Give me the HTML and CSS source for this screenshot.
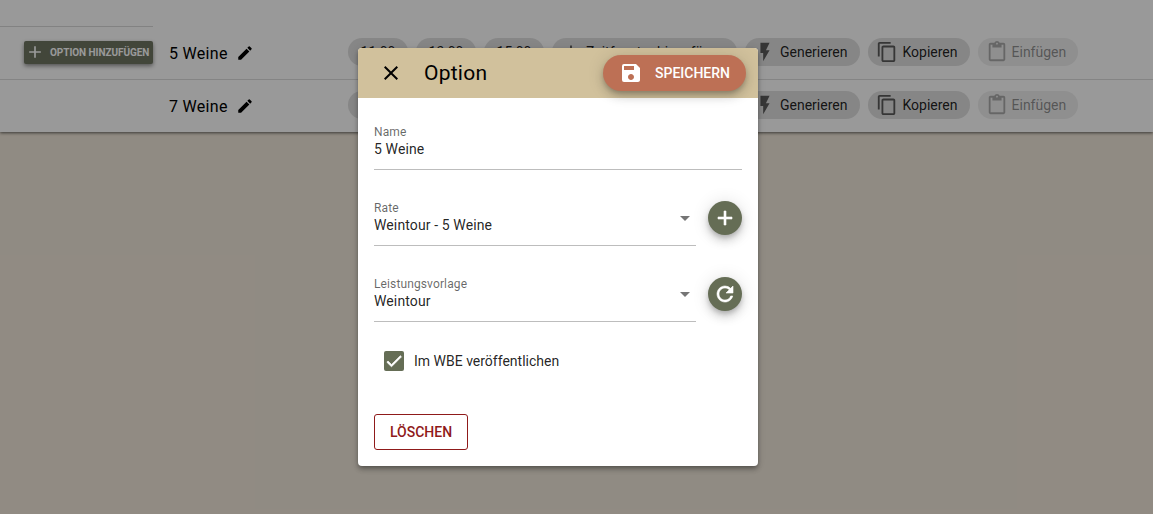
FILE: index.html
```html
<!DOCTYPE html>
<html lang="de">
<head>
<meta charset="utf-8">
<title>Option</title>
<link rel="stylesheet" href="styles.css">
</head>
<body>
<svg width="0" height="0" class="defs">
  <symbol id="i-pencil" viewBox="0 0 24 24"><path d="M3 17.25V21h3.75L17.81 9.94l-3.75-3.75L3 17.25zM20.71 7.04a1 1 0 0 0 0-1.41l-2.34-2.34a1 1 0 0 0-1.41 0l-1.83 1.83 3.75 3.75 1.83-1.83z"/></symbol>
  <symbol id="i-bolt" viewBox="0 0 24 24"><path d="M7 2v11h3v9l7-12h-4l4-8z"/></symbol>
  <symbol id="i-copy" viewBox="0 0 24 24"><path d="M16 1H4c-1.1 0-2 .9-2 2v14h2V3h12V1zm3 4H8c-1.1 0-2 .9-2 2v14c0 1.1.9 2 2 2h11c1.1 0 2-.9 2-2V7c0-1.100-.9-2-2-2zm0 16H8V7h11v14z"/></symbol>
  <symbol id="i-paste" viewBox="0 0 24 24"><path d="M19 2h-4.180C14.400.84 13.300 0 12 0S9.600.84 9.180 2H5c-1.100 0-2 .9-2 2v16c0 1.100.9 2 2 2h14c1.100 0 2-.9 2-2V4c0-1.100-.9-2-2-2zm-7 0c.55 0 1 .45 1 1s-.45 1-1 1-1-.45-1-1 .45-1 1-1zm7 18H5V4h2v3h10V4h2v16z"/></symbol>
  <symbol id="i-plus" viewBox="0 0 24 24"><path d="M19 13h-6v6h-2v-6H5v-2h6V5h2v6h6v2z"/></symbol>
</svg>

<div class="page">
  <div class="panel">
    <div class="rule-short"></div>
    <div class="row row-first">
      <div class="row-side">
        <button class="add-option"><svg class="ic-add"><use href="#i-plus"/></svg><span>OPTION HINZUFÜGEN</span></button>
      </div>
      <div class="row-name"><span>5 Weine</span><svg class="ic18"><use href="#i-pencil"/></svg></div>
      <div class="chips">
        <span class="chip chip-time">11:00</span>
        <span class="chip chip-time">13:00</span>
        <span class="chip chip-time">15:00</span>
        <span class="chip chip-tel"><svg class="ic24"><use href="#i-plus"/></svg>Zeitfenster hinzufügen</span>
        <span class="chip chip-gen"><svg class="ic24"><use href="#i-bolt"/></svg>Generieren</span>
        <span class="chip"><svg class="ic24"><use href="#i-copy"/></svg>Kopieren</span>
        <span class="chip chip-off"><svg class="ic24"><use href="#i-paste"/></svg>Einfügen</span>
      </div>
    </div>
    <div class="row">
      <div class="row-side"></div>
      <div class="row-name"><span>7 Weine</span><svg class="ic18"><use href="#i-pencil"/></svg></div>
      <div class="chips">
        <span class="chip chip-time">11:00</span>
        <span class="chip chip-time">13:00</span>
        <span class="chip chip-time">15:00</span>
        <span class="chip chip-tel"><svg class="ic24"><use href="#i-plus"/></svg>Zeitfenster hinzufügen</span>
        <span class="chip chip-gen"><svg class="ic24"><use href="#i-bolt"/></svg>Generieren</span>
        <span class="chip"><svg class="ic24"><use href="#i-copy"/></svg>Kopieren</span>
        <span class="chip chip-off"><svg class="ic24"><use href="#i-paste"/></svg>Einfügen</span>
      </div>
    </div>
  </div>
</div>

<div class="backdrop"></div>

<div class="dialog">
  <header class="dialog-head">
    <svg class="close" viewBox="0 0 24 24"><path d="M19 6.410 17.590 5 12 10.590 6.410 5 5 6.410 10.590 12 5 17.590 6.410 19 12 13.410 17.590 19 19 17.590 13.410 12z"/></svg>
    <h1>Option</h1>
    <button class="save">
      <svg viewBox="0 0 24 24"><path d="M17 3H5a2 2 0 0 0-2 2v14a2 2 0 0 0 2 2h14c1.100 0 2-.9 2-2V7l-4-4zm-5 16c-1.660 0-3-1.340-3-3s1.340-3 3-3 3 1.340 3 3-1.340 3-3 3zm3-10H5V5h10v4z"/></svg>
      <span>SPEICHERN</span>
    </button>
  </header>
  <div class="dialog-body">
    <div class="field">
      <label>Name</label>
      <div class="value">5 Weine</div>
    </div>
    <div class="field-row">
      <div class="field">
        <label>Rate</label>
        <div class="value">Weintour - 5 Weine</div>
        <i class="caret"></i>
      </div>
      <button class="fab"><svg viewBox="0 0 24 24"><path d="M19 13h-6v6h-2v-6H5v-2h6V5h2v6h6v2z"/></svg></button>
    </div>
    <div class="field-row">
      <div class="field">
        <label>Leistungsvorlage</label>
        <div class="value">Weintour</div>
        <i class="caret"></i>
      </div>
      <button class="fab"><svg viewBox="0 0 24 24"><path d="M17.650 6.350A7.958 7.958 0 0 0 12 4c-4.420 0-7.990 3.580-7.990 8s3.570 8 7.990 8c3.730 0 6.840-2.550 7.730-6h-2.080A5.990 5.990 0 0 1 12 18c-3.310 0-6-2.690-6-6s2.690-6 6-6c1.660 0 3.140.69 4.220 1.780L13 11h7V4l-2.350 2.350z"/></svg></button>
    </div>
    <div class="check">
      <span class="box"><svg viewBox="0 0 24 24"><path d="M9 16.170 4.830 12l-1.420 1.410L9 19 21 7l-1.410-1.410z"/></svg></span>
      <span>Im WBE veröffentlichen</span>
    </div>
    <button class="delete">LÖSCHEN</button>
  </div>
</div>
</body>
</html>
```

FILE: styles.css
```css
* { box-sizing: border-box; }
html, body { margin: 0; height: 100%; }
body { background: #f1e8da; font-family: Roboto, "Liberation Sans", sans-serif; overflow: hidden; color: #111; }
button { font-family: inherit; border: 0; padding: 0; margin: 0; }
.defs { position: absolute; }

.page { height: 514px; }
.panel { height: 132px; background: #fff; padding-top: 26px; box-shadow: 0 1px 3px rgba(0,0,0,.6); }
.rule-short { width: 153px; height: 1px; background: #d9d9d9; }
.row { height: 53px; display: flex; align-items: center; border-bottom: 1px solid #dcdcdc; }
.row:last-child { border-bottom-color: transparent; }
.row-side { width: 169px; padding-left: 24px; flex: none; }
.add-option { display: flex; align-items: center; width: 129px; height: 23px; margin-bottom: 2px; background: #6e7562; color: #fff; border-radius: 2px; font-size: 10px; font-weight: 700; box-shadow: 0 2px 4px rgba(0,0,0,.45); padding-left: 1px; white-space: nowrap; }
.add-option span { margin-left: 5px; letter-spacing: -.05px; }
.ic-add { width: 20px; height: 20px; fill: #fff; flex: none; }
.row-name { width: 179px; flex: none; display: flex; align-items: center; gap: 7px; font-size: 16px; letter-spacing: .3px; color: #000; }
.ic18 { width: 18px; height: 18px; fill: #000; margin-left: 1px; margin-right: -1px; }
.chips { display: flex; gap: 8px; margin-bottom: 2px; }
.chip { height: 28px; border-radius: 14px; background: #e0e0e0; display: flex; align-items: center; font-size: 14px; color: rgba(0,0,0,.87); padding: 0 12px 0 8px; white-space: nowrap; }
.chip-time { width: 60px; justify-content: center; padding: 0; }
.chip-tel { width: 185px; overflow: hidden; }
.chip-gen { padding: 0 13px 0 9px; }
.chip-off { opacity: .5; }
.ic24 { width: 22px; height: 22px; margin-right: 4px; fill: rgba(0,0,0,.6); flex: none; }

.backdrop { position: absolute; inset: 0; background: rgba(0,0,0,.4); }

.dialog { position: absolute; left: 358px; top: 48px; width: 400px; height: 418px; background: #fff; border-radius: 4px; overflow: hidden; box-shadow: 0 2px 4px -1px rgba(0,0,0,.3), 0 4px 5px 0 rgba(0,0,0,.16), 0 1px 8px 0 rgba(0,0,0,.1); }
.dialog-head { height: 50px; background: #d1c19c; display: flex; align-items: center; padding: 0 12px 0 21px; }
.close { width: 24px; height: 24px; fill: #000; flex: none; }
.dialog-head h1 { margin: 0 0 0 21px; font-size: 21px; font-weight: 400; letter-spacing: .25px; color: #000; flex: 1; }
.save { width: 143px; height: 36px; border-radius: 18px; background: #bd7055; color: #fff; font-size: 14px; font-weight: 500; display: flex; align-items: center; padding-left: 16px; box-shadow: 0 3px 5px -1px rgba(0,0,0,.2), 0 6px 10px 0 rgba(0,0,0,.14), 0 1px 18px 0 rgba(0,0,0,.12); }
.save svg { width: 24px; height: 24px; fill: #fff; }
.save span { margin-left: 12px; }

.dialog-body { padding: 0 16px; }
.field { position: relative; flex: 1; height: 44px; border-bottom: 1px solid #bdbdbd; }
.dialog-body > .field { margin-top: 28px; }
.field-row { display: flex; align-items: flex-start; gap: 12px; margin-top: 32px; }
.field label { display: block; font-size: 12px; line-height: 14px; letter-spacing: .12px; color: rgba(0,0,0,.6); position: relative; top: -1px; }
.field .value { font-size: 14px; line-height: 20px; letter-spacing: .12px; color: rgba(0,0,0,.87); position: relative; top: -1px; }
.caret { position: absolute; right: 6px; top: 14px; width: 0; height: 0; border-left: 5px solid transparent; border-right: 5px solid transparent; border-top: 5px solid rgba(0,0,0,.54); }
.fab { width: 34px; height: 34px; border-radius: 50%; background: #656d55; margin-top: -1px; display: flex; align-items: center; justify-content: center; box-shadow: 0 3px 5px -1px rgba(0,0,0,.2), 0 6px 10px 0 rgba(0,0,0,.14), 0 1px 18px 0 rgba(0,0,0,.12); }
.fab svg { width: 24px; height: 24px; fill: #fff; stroke: #fff; stroke-width: .6; }
.check { display: flex; align-items: center; gap: 10px; margin: 29px 0 0 10px; font-size: 14px; color: rgba(0,0,0,.87); }
.box { width: 20px; height: 20px; border-radius: 2px; background: #656d55; display: flex; align-items: center; justify-content: center; }
.box svg { width: 20px; height: 20px; fill: #fff; stroke: #fff; stroke-width: .8; }
.delete { display: block; width: 94px; height: 36px; margin-top: 43px; background: #fff; border: 1px solid #8f1a1a; border-radius: 3px; color: #8f1a1a; font-size: 14px; font-weight: 500; }
```
